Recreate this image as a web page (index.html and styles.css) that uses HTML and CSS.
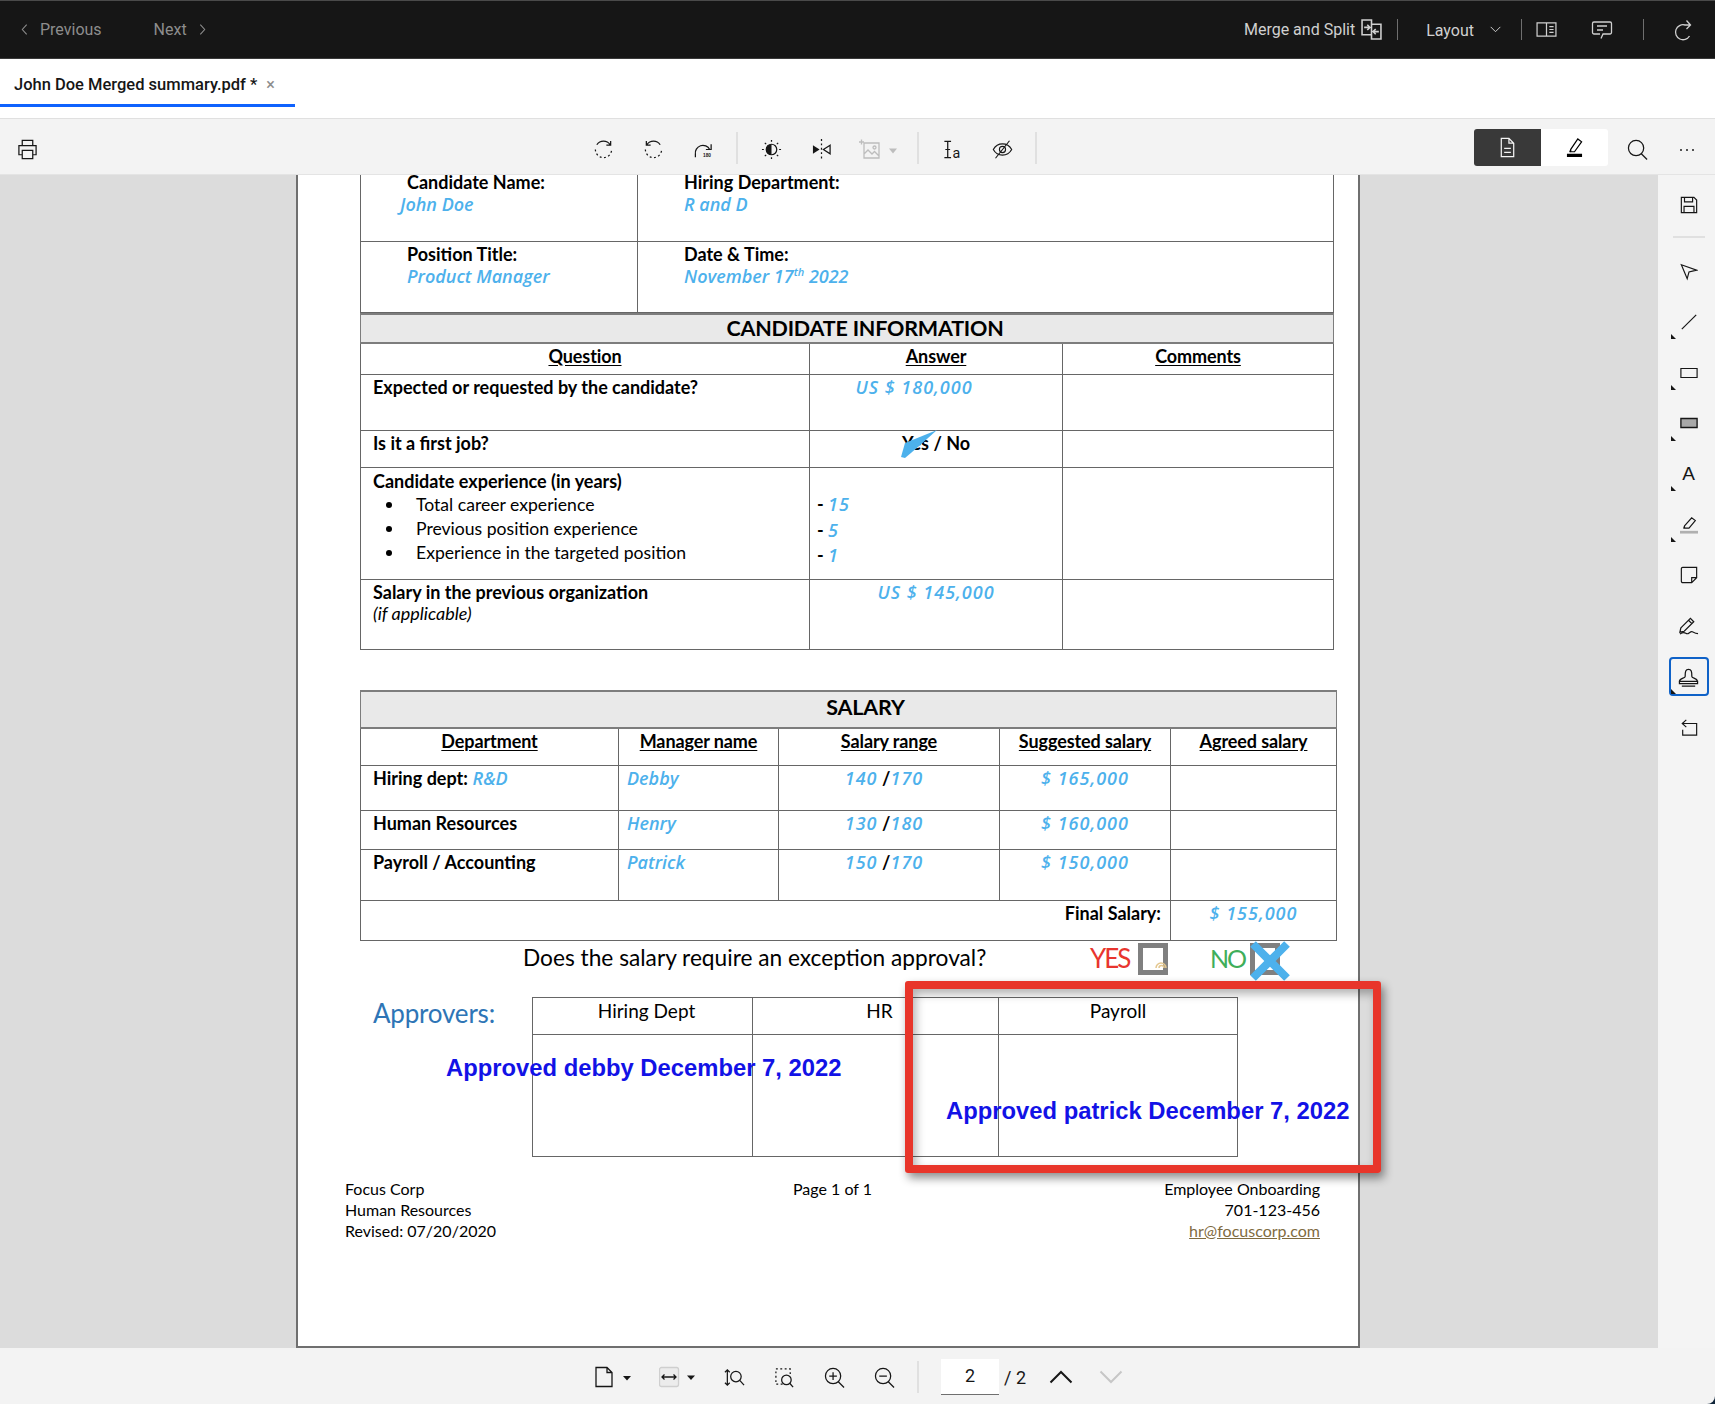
FILE: index.html
```html
<!DOCTYPE html>
<html lang="en">
<head>
<meta charset="utf-8">
<title>John Doe Merged summary.pdf</title>
<link rel="stylesheet" href="styles.css">
</head>
<body>
<div class="app">

  <header class="topbar">
    <div class="pager">
      <svg class="chev" viewBox="0 0 8 14"><path d="M6.500 1.500 1.500 7l5 5.500"/></svg>
      <span class="pager-label">Previous</span>
      <span class="pager-label next">Next</span>
      <svg class="chev after" viewBox="0 0 8 14"><path d="M1.500 1.500 6.500 7l-5 5.500"/></svg>
    </div>
    <div class="topbar-right">
      <span class="top-label">Merge and Split</span>
      <svg class="top-icon merge" viewBox="0 0 20 20"><path d="M1 1h9v14H1zM10 5h9v14h-9zM3 8h5M6 5.500 8.500 8 6 10.500M17 12h-5M14 9.500 11.500 12l2.500 2.500"/></svg>
      <i class="top-sep first"></i>
      <span class="top-label layout">Layout</span>
      <svg class="chev-down" viewBox="0 0 14 8"><path d="M1.500 1 7 6.500 12.500 1"/></svg>
      <i class="top-sep second"></i>
      <svg class="top-icon panel" viewBox="0 0 22 18"><path d="M1 2h20v14H1zM11 2v14M14 6h4.500M14 9h4.500M14 12h4.500"/></svg>
      <svg class="top-icon comment" viewBox="0 0 22 20"><path d="M3 2h16a1.500 1.500 0 0 1 1.500 1.500v9A1.500 1.500 0 0 1 19 14h-7l-2 4.500M9 14H3a1.500 1.500 0 0 1-1.500-1.500v-9A1.500 1.500 0 0 1 3 2M6 6h10M6 10h6"/></svg>
      <i class="top-sep third"></i>
      <svg class="top-icon refresh" viewBox="0 0 18 22"><path d="M15.500 17A7.500 7.500 0 1 1 11 6h5M12.500 1.500 16.500 6l-4 4"/></svg>
    </div>
  </header>

  <nav class="tabs">
    <div class="tab"><span>John Doe Merged summary.pdf *</span><span class="tab-close">×</span></div>
  </nav>

  <div class="toolbar">
    <button class="tool print">
      <svg viewBox="0 0 22 22"><path d="M5.500 7V1.500h11V7M5.500 16.500H2V7h18v9.500h-3.500M5.500 12h11v8.500h-11z"/></svg>
    </button>
    <button class="tool rotate-first">
      <svg viewBox="0 0 22 22"><path d="M4 6a8.500 8.500 0 0 1 14 0M18.500 2v4.500H14"/><path class="dashed" d="M2.500 11a8.500 8.500 0 0 0 17 0"/></svg>
    </button>
    <button class="tool">
      <svg viewBox="0 0 22 22"><path d="M18 6A8.500 8.500 0 0 0 4 6M3.500 2v4.500H8"/><path class="dashed" d="M2.500 11a8.500 8.500 0 0 0 17 0"/></svg>
    </button>
    <button class="tool">
      <svg viewBox="0 0 22 22"><path d="M2.500 19v-3a8 8 0 0 1 15-5M19 5.500V11h-5.500"/><text class="tiny" x="10.500" y="19">180</text></svg>
    </button>
    <i class="tool-sep"></i>
    <button class="tool">
      <svg viewBox="0 0 22 22"><circle cx="11" cy="11" r="5.500"/><path class="solid" d="M11 5.500a5.500 5.500 0 0 1 0 11z" transform="matrix(-1 0 0 1 22 0)"/><path d="M11 1v2M11 19v2M1 11h2M19 11h2M4 4l1.400 1.400M16.600 16.600 18 18M4 18l1.400-1.400M16.600 5.400 18 4"/></svg>
    </button>
    <button class="tool">
      <svg viewBox="0 0 22 22"><path class="solid" d="M2 6.500 9 11l-7 4.500z"/><path d="M20 6.500 13 11l7 4.500z"/><path class="dashed" d="M11 0v22"/></svg>
    </button>
    <button class="tool image-tool" disabled>
      <svg class="image-icon" viewBox="0 0 40 22"><path d="M5 4h15v15H5zM5 15l4-4 4 4 2.500-2.500L20 17"/><circle cx="15.500" cy="8.500" r="1.500"/><path d="M2.500.5v5M0 3h5"/><path class="solid" d="m30 9.500h8l-4 5z"/></svg>
    </button>
    <i class="tool-sep"></i>
    <button class="tool">
      <svg viewBox="0 0 22 22"><path d="M2.500 2.500h7M2.500 19.500h7M6 2.500v17M3.500 11h5"/><text class="glyph" x="11" y="19.500">a</text></svg>
    </button>
    <button class="tool">
      <svg viewBox="0 0 24 22"><path d="M1.500 11C4 6.500 8 4.500 12 4.500s8 2 10.500 6.500c-2.500 4.500-6.500 6.500-10.500 6.500S4 15.500 1.500 11z"/><circle cx="12" cy="11" r="3.500"/><path d="M20 1 4 21"/></svg>
    </button>
    <i class="tool-sep"></i>
    <div class="mode-switch">
      <button class="mode on">
        <svg viewBox="0 0 16 22"><path d="M1.500 1.500h8l5 5v14h-13zM9.500 1.500v5h5M4.500 12h7M4.500 16h7"/></svg>
      </button>
      <button class="mode">
        <svg viewBox="0 0 18 22"><path d="M5 13 12.500 2l4 3L9 15.500H5zM5 13l-1 3"/><path class="solid" d="M1 17.500h16V21H1z"/></svg>
      </button>
    </div>
    <button class="tool">
      <svg viewBox="0 0 22 22"><circle cx="9.500" cy="9.500" r="8"/><path d="m15 15.500 6 6"/></svg>
    </button>
    <button class="tool dots"><i></i><i></i><i></i></button>
  </div>

  <div class="workspace">
    <main class="viewer">
      <article class="pdf-page">

        <table class="doc-table head-table">
          <colgroup><col class="c-name"><col></colgroup>
          <tr class="r-name">
            <td class="info"><b>Candidate Name:</b><span class="hand shift">John Doe</span></td>
            <td class="info"><b>Hiring Department:</b><span class="hand">R and D</span></td>
          </tr>
          <tr class="r-title">
            <td class="info"><b>Position Title:</b><span class="hand">Product Manager</span></td>
            <td class="info"><b>Date &amp; Time:</b><span class="hand">November 17<sup>th</sup> 2022</span></td>
          </tr>
        </table>

        <table class="doc-table">
          <colgroup><col class="c-q"><col class="c-a"><col></colgroup>
          <tr class="r-band"><th class="band info-band" colspan="3">CANDIDATE INFORMATION</th></tr>
          <tr class="r-cols"><th><u>Question</u></th><th><u>Answer</u></th><th><u>Comments</u></th></tr>
          <tr class="r-expected">
            <td><b>Expected or requested by the candidate?</b></td>
            <td class="ans off-left"><span class="hand amt">US $ 180,000</span></td>
            <td></td>
          </tr>
          <tr class="r-first">
            <td><b>Is it a first job?</b></td>
            <td class="ans"><b class="yesno">Yes / No<svg class="tick" viewBox="0 0 36 28"><path d="M0 27 4 13 36 0 17 17 4 28z"/></svg></b></td>
            <td></td>
          </tr>
          <tr class="r-exp">
            <td>
              <b>Candidate experience (in years)</b>
              <ul class="exp-list">
                <li>Total career experience</li>
                <li>Previous position experience</li>
                <li>Experience in the targeted position</li>
              </ul>
            </td>
            <td class="years">
              <div>- <span class="hand amt">15</span></div>
              <div>- <span class="hand amt">5</span></div>
              <div>- <span class="hand amt">1</span></div>
            </td>
            <td></td>
          </tr>
          <tr class="r-prev">
            <td><b>Salary in the previous organization</b><em>(if applicable)</em></td>
            <td class="ans"><span class="hand amt">US $ 145,000</span></td>
            <td></td>
          </tr>
        </table>

        <table class="doc-table salary">
          <colgroup><col class="s1"><col class="s2"><col class="s3"><col class="s4"><col></colgroup>
          <tr class="s-band"><th class="band salary-band" colspan="5">SALARY</th></tr>
          <tr class="s-cols">
            <th><u>Department</u></th><th><u>Manager name</u></th><th><u>Salary range</u></th><th><u>Suggested salary</u></th><th><u>Agreed salary</u></th>
          </tr>
          <tr class="s-r1">
            <td><b>Hiring dept:</b> <span class="hand">R&amp;D</span></td>
            <td class="mgr"><span class="hand">Debby</span></td>
            <td class="ans range"><span class="hand amt">140</span> <b>/</b><span class="hand amt">170</span></td>
            <td class="ans"><span class="hand amt">$ 165,000</span></td>
            <td></td>
          </tr>
          <tr class="s-r2">
            <td><b>Human Resources</b></td>
            <td class="mgr"><span class="hand">Henry</span></td>
            <td class="ans range"><span class="hand amt">130</span> <b>/</b><span class="hand amt">180</span></td>
            <td class="ans"><span class="hand amt">$ 160,000</span></td>
            <td></td>
          </tr>
          <tr class="s-r3">
            <td><b>Payroll / Accounting</b></td>
            <td class="mgr"><span class="hand">Patrick</span></td>
            <td class="ans range"><span class="hand amt">150</span> <b>/</b><span class="hand amt">170</span></td>
            <td class="ans"><span class="hand amt">$ 150,000</span></td>
            <td></td>
          </tr>
          <tr class="s-final">
            <td class="final" colspan="4"><b>Final Salary:</b></td>
            <td class="ans"><span class="hand amt">$ 155,000</span></td>
          </tr>
        </table>

        <div class="exception">
          <span class="exception-q">Does the salary require an exception approval?</span>
          <span class="opt yes">YES</span>
          <span class="box"><svg class="wifi" viewBox="0 0 12 10"><path d="M1 9a5 5 0 0 1 10 0M4 9a2.500 2.500 0 0 1 5 0"/></svg></span>
          <span class="opt no">NO</span>
          <span class="box"><svg class="cross" viewBox="0 0 40 40"><path d="M3 3l34 34M37 3 3 37"/></svg></span>
        </div>

        <div class="approvers">
          <h2>Approvers:</h2>
          <table class="doc-table approve-table">
            <colgroup><col class="a1"><col class="a2"><col></colgroup>
            <tr class="a-head"><td>Hiring Dept</td><td>HR</td><td>Payroll</td></tr>
            <tr class="a-body"><td></td><td></td><td></td></tr>
          </table>
        </div>

        <footer class="doc-foot">
          <div>Focus Corp<br>Human Resources<br>Revised: 07/20/2020</div>
          <div>Page 1 of 1</div>
          <div class="foot-right">Employee Onboarding<br>701-123-456<br><a>hr@focuscorp.com</a></div>
        </footer>

        <div class="stamp debby">Approved debby December 7, 2022</div>
        <div class="stamp patrick">Approved patrick December 7, 2022</div>
      </article>
      <div class="callout"></div>
    </main>

    <aside class="sidebar">
      <button class="side save"><svg viewBox="0 0 20 20"><path d="M1.500 1.500h14l3 3v14h-17zM5 1.500v5h9v-5M4.500 18.500v-7h11v7"/></svg></button>
      <i class="side-sep"></i>
      <button class="side"><svg viewBox="0 0 20 20"><path d="M1.500 3 18.500 9 10 11 8 18.500z"/></svg></button>
      <button class="side flag"><svg viewBox="0 0 20 20"><path d="M2 18 18 2"/></svg></button>
      <button class="side flag"><svg viewBox="0 0 20 12"><path d="M1 1h18v10H1z"/></svg></button>
      <button class="side flag"><svg viewBox="0 0 20 12"><path class="grey" d="M1 1h18v10H1z"/></svg></button>
      <button class="side flag letter">A</button>
      <button class="side flag"><svg viewBox="0 0 20 20"><path d="M5 11 13 2l4 3-7 8.500H5zM5 11l-1 3"/><path class="rule" d="M0 18h20"/></svg></button>
      <button class="side"><svg viewBox="0 0 20 20"><path d="M3 1.500h15.500V13L13 18.500H3a1.500 1.500 0 0 1-1.500-1.500V3A1.500 1.500 0 0 1 3 1.500zM13 18.500V13h5.500"/></svg></button>
      <button class="side wide-icon"><svg viewBox="0 0 22 20"><path d="M3 12 13 2l3.500 3.500-10 10L2 16.500zM11 4l3.500 3.500M2 18.500c4-3 5-1.500 7-.500s4-3 6-2 4 2 6 2"/></svg></button>
      <button class="side active wide-icon flag"><svg viewBox="0 0 22 20"><path d="M7.500 9.500C7.500 4 8 2 11 2s3.500 2 3.500 7.500c0 2 5.500 1.500 6 5h-19c.5-3.500 6-3 6-5zM1.500 14.500h19V17h-19zM4 19.500h14"/></svg></button>
      <button class="side"><svg viewBox="0 0 20 20"><path d="M3 5h15.500v13H3V12M7 1 2.500 5 7 9"/></svg></button>
    </aside>
  </div>

  <footer class="bottombar">
    <button class="tool wide page-tool">
      <svg viewBox="0 0 40 22"><path d="M1 1.500h11l5 5V20.500H1zM12 1.500v5h5"/><path class="solid" d="M28 10h8l-4 4.500z"/></svg>
    </button>
    <button class="tool wide fit-tool">
      <svg viewBox="0 0 40 22"><rect class="fit-box" x=".5" y="1.500" width="19" height="19" rx="2"/><path d="M3 11h14M5.500 8.500 3 11l2.500 2.500M14.500 8.500 17 11l-2.500 2.500"/><path class="solid" d="M28 9.500h8l-4 4.500z"/></svg>
    </button>
    <button class="tool"><svg viewBox="0 0 22 22"><path d="M3.500 3v16M1 5.500 3.500 3 6 5.500M1 16.500 3.500 19 6 16.500"/><circle cx="12.500" cy="10" r="5.500"/><path d="m16.500 14 4.500 5"/></svg></button>
    <button class="tool"><svg viewBox="0 0 22 22"><path class="dashed" d="M9 18H2V2h15v6"/><circle cx="13" cy="13.500" r="5"/><path d="m16.500 17 3.500 4"/></svg></button>
    <button class="tool"><svg viewBox="0 0 22 22"><circle cx="9.500" cy="9.500" r="8"/><path d="m15 15.500 6 6M5.500 9.500h8M9.500 5.500v8"/></svg></button>
    <button class="tool"><svg viewBox="0 0 22 22"><circle cx="9.500" cy="9.500" r="8"/><path d="m15 15.500 6 6M5.500 9.500h8"/></svg></button>
    <i class="tool-sep"></i>
    <span class="page-input">2</span>
    <span class="page-total">/ 2</span>
    <button class="tool arrow up"><svg viewBox="0 0 24 14"><path d="M1.500 12.500 12 2l10.500 10.500"/></svg></button>
    <button class="tool arrow down"><svg viewBox="0 0 24 14"><path d="M1.500 1.500 12 12 22.500 1.500"/></svg></button>
  </footer>
</div>
</body>
</html>
```

FILE: styles.css
```css
* {
  box-sizing: border-box;
}
body {
  margin: 0;
  background: #fff;
  font-family: Roboto, "Noto Sans", sans-serif;
  color: #161616;
}
button {
  border: 0;
  padding: 0;
  background: none;
  font: inherit;
}
svg {
  display: block;
  flex: none;
  fill: none;
  stroke: currentColor;
  stroke-width: 1.3;
}
svg .solid {
  fill: currentColor;
  stroke: none;
}
svg .dashed {
  stroke-dasharray: 2 2.6;
}
svg text {
  fill: currentColor;
  stroke: none;
}
svg .tiny {
  font: 700 5px "Liberation Sans", sans-serif;
}
svg .glyph {
  font: 15px Roboto, sans-serif;
}

.app {
  width: 1715px;
  height: 1404px;
  display: flex;
  flex-direction: column;
  background: #10263a;
}

/* top dark bar */
.topbar {
  height: 59px;
  flex: none;
  display: flex;
  align-items: center;
  background: #161616;
  border-top: 1px solid #4a4a4a;
  border-bottom: 1px solid #3a3a3a;
  padding-left: 21px;
}
.pager {
  display: flex;
  align-items: center;
  color: #8d8d8d;
  font-size: 16px;
}
.chev {
  width: 7px;
  height: 13px;
  stroke-width: 1.2;
}
.chev.after {
  margin-left: 12px;
}
.pager-label {
  margin-left: 12px;
}
.pager-label.next {
  margin-left: 52px;
}
.topbar-right {
  margin-left: auto;
  display: flex;
  align-items: center;
  color: #d0d0d0;
}
.top-label {
  font-size: 16px;
}
.top-label.layout {
  margin-left: 28px;
  margin-top: 2px;
}
.top-icon.merge {
  width: 21px;
  height: 21px;
  margin-left: 6px;
  stroke-width: 1.5;
}
.top-icon.panel {
  width: 21px;
  height: 17px;
  margin-left: 14px;
}
.top-icon.comment {
  width: 22px;
  height: 20px;
  margin-left: 34px;
}
.top-icon.refresh {
  width: 18px;
  height: 22px;
  margin-left: 30px;
  margin-right: 23px;
}
.chev-down {
  width: 13px;
  height: 7px;
  margin-left: 15px;
  stroke-width: 1.1;
}
.top-sep {
  width: 1px;
  height: 21px;
  background: #6f6f6f;
}
.top-sep.first {
  margin-left: 15px;
}
.top-sep.second {
  margin-left: 19px;
}
.top-sep.third {
  margin-left: 30px;
}

/* tabs */
.tabs {
  height: 60px;
  flex: none;
  background: #fff;
  border-bottom: 1px solid #e0e0e0;
}
.tab {
  width: 295px;
  height: 48px;
  display: flex;
  align-items: center;
  padding: 6px 0 0 14px;
  border-bottom: 3px solid #0f62fe;
  font-size: 16.5px;
  font-weight: 500;
}
.tab-close {
  margin-left: 9px;
  color: #8d8d8d;
  font-size: 16px;
}

/* main toolbar */
.toolbar {
  height: 56px;
  flex: none;
  display: flex;
  align-items: center;
  padding-top: 6px;
  background: #f3f3f3;
  border-bottom: 1px solid #e4e4e4;
}
.tool {
  width: 50px;
  height: 40px;
  flex: none;
  display: flex;
  align-items: center;
  justify-content: center;
  color: #161616;
}
.tool svg {
  width: 21px;
  height: 21px;
}
.tool.print {
  width: 54px;
}
.tool.rotate-first {
  margin-left: 524px;
}
.tool.image-tool {
  width: 63px;
  justify-content: flex-start;
}
.tool .image-icon {
  width: 40px;
  height: 22px;
  margin-left: 13px;
  color: #bdbdbd;
}
.tool-sep {
  width: 2px;
  height: 32px;
  flex: none;
  margin: -4px 8px 0;
  background: #e0e0e0;
}
.mode-switch {
  display: flex;
  margin: -4px 4px 0 auto;
  height: 37px;
  border-radius: 3px;
  overflow: hidden;
  background: #fff;
}
.mode {
  width: 67px;
  display: flex;
  align-items: center;
  justify-content: center;
}
.mode.on {
  background: #393939;
  color: #f4f4f4;
}
.mode svg {
  width: 17px;
  height: 21px;
}
.tool.dots {
  gap: 4px;
  margin-right: 3px;
}
.tool.dots i {
  width: 2px;
  height: 2px;
  background: #525252;
}

/* document area */
.workspace {
  flex: 1;
  min-height: 0;
  display: flex;
}
.viewer {
  flex: 1;
  position: relative;
  background: #dcdcdc;
  padding-left: 296px;
}
.pdf-page {
  position: relative;
  width: 1064px;
  height: 100%;
  padding-left: 62px;
  background: #fff;
  border: 2px solid #6f6f6f;
  border-top: 0;
  font-family: Lato, "Noto Sans", sans-serif;
  font-size: 18px;
  color: #000;
}
.doc-table {
  width: 974px;
  border-collapse: collapse;
  table-layout: fixed;
}
.doc-table td,
.doc-table th {
  padding: 0;
  border: 1px solid #666;
  vertical-align: top;
}
.head-table td {
  border-top: 0;
}
.head-table tr + tr td {
  border-top: 1px solid #666;
}
.doc-table th {
  font-size: 18px;
  font-weight: 700;
  text-align: center;
  padding-top: 1px;
  letter-spacing: -.1px;
}
.doc-table u {
  text-underline-offset: 2px;
}
.doc-table b {
  font-size: 18px;
}
.doc-table th.band {
  background: #e9e9e9;
  font-size: 21.5px;
  border-width: 2px 1px;
  border-color: #7d7d7d;
  letter-spacing: -.2px;
}
.doc-table th.info-band {
  padding: 0 0 0 36px;
}
.doc-table th.salary-band {
  padding: 2px 0 0 34px;
}
.c-name {
  width: 277px;
}
.r-name {
  height: 66px;
}
.r-title {
  height: 71px;
}
.doc-table .info {
  padding: 0 0 0 46px;
}
.doc-table .r-title .info {
  padding-top: 3px;
}
.info b {
  display: block;
  line-height: 18px;
}
.r-name .info b {
  margin-top: -2px;
}
.info .hand {
  display: block;
  margin-top: 2px;
  line-height: 22px;
}
.info .hand.shift {
  margin-left: -7px;
}
.info .hand sup {
  font-size: 11px;
  line-height: 0;
}
.hand {
  font-family: "Open Sans", "DejaVu Sans", sans-serif;
  font-style: italic;
  font-weight: 600;
  font-size: 18px;
  color: #4db1ec;
}
.hand.amt {
  letter-spacing: 1px;
}
.c-q {
  width: 449px;
}
.c-a {
  width: 253px;
}
.r-band {
  height: 29px;
}
.r-cols {
  height: 32px;
}
.r-expected {
  height: 56px;
}
.r-first {
  height: 37px;
}
.r-exp {
  height: 112px;
}
.r-prev {
  height: 70px;
}
.doc-table td:first-child {
  padding-left: 12px;
}
.doc-table .info:first-child {
  padding-left: 46px;
}
.r-expected td {
  padding-top: 2px;
  line-height: 20px;
}
.r-first td {
  padding-top: 2px;
  line-height: 20px;
}
.r-exp td {
  padding-top: 3px;
  line-height: 20px;
}
.r-prev td {
  padding-top: 2px;
  line-height: 20px;
}
.r-prev b,
.r-prev em {
  display: block;
}
.r-prev em {
  margin-top: 1px;
}
.exp-list {
  margin: 2px 0 0;
  padding: 0 0 0 43px;
  list-style: none;
  font-size: 17.6px;
}
.exp-list li {
  position: relative;
  height: 24px;
  line-height: 24px;
}
.exp-list li::before {
  content: "";
  position: absolute;
  left: -30px;
  top: 9px;
  width: 6px;
  height: 6px;
  border-radius: 50%;
  background: #000;
}
.ans {
  text-align: center;
}
.doc-table .off-left {
  padding-right: 44px;
}
.doc-table .range {
  padding-right: 10px;
}
.yesno {
  position: relative;
  display: inline-block;
}
.tick {
  position: absolute;
  left: -1px;
  top: -3px;
  width: 36px;
  height: 28px;
  stroke: none;
  fill: #4db1ec;
}
.doc-table .years {
  padding: 25px 0 0 7px;
  font-weight: 700;
}
.years div {
  height: 25.5px;
  line-height: 22px;
}
.salary {
  width: 977px;
  margin-top: 40px;
}
.s1 {
  width: 258px;
}
.s2 {
  width: 160px;
}
.s3 {
  width: 221px;
}
.s4 {
  width: 171px;
}
.s-band {
  height: 37px;
}
.doc-table .s-cols th {
  padding-top: 1px;
}
.s-cols {
  height: 37px;
}
.s-r1 {
  height: 45px;
}
.s-r2 {
  height: 39px;
}
.s-r3 {
  height: 51px;
}
.s-final {
  height: 40px;
}
.salary td {
  padding-top: 1px;
  line-height: 22px;
}
.doc-table .mgr {
  padding-left: 8px;
}
td.final {
  text-align: right;
  padding-right: 9px;
}
.exception {
  height: 56px;
  display: flex;
  align-items: flex-start;
  padding: 1px 0 0 163px;
}
.exception-q {
  width: 567px;
  font-size: 22.7px;
  line-height: 32px;
}
.opt {
  width: 48px;
  font-size: 26px;
  line-height: 32px;
  letter-spacing: -2px;
}
.opt.yes {
  color: #e8352e;
}
.opt.no {
  color: #3fae5a;
  width: 40px;
  margin-left: 42px;
  font-size: 25px;
}
.box {
  position: relative;
  width: 30px;
  height: 32px;
  margin-top: 1px;
  border: 5px solid #808080;
}
.wifi {
  position: absolute;
  right: -4px;
  bottom: 1px;
  width: 12px;
  height: 10px;
  color: #e4c78f;
  stroke-width: 1.5;
}
.cross {
  position: absolute;
  left: -5px;
  top: -7px;
  width: 40px;
  height: 40px;
  color: #4db1ec;
  stroke-width: 8;
}
.approvers {
  display: flex;
  padding-left: 13px;
}
.approvers h2 {
  width: 159px;
  margin: 0;
  font-size: 26px;
  font-weight: 400;
  line-height: 32px;
  letter-spacing: -.2px;
  color: #2e75b6;
}
.approve-table {
  width: 706px;
  font-size: 19px;
}
.a1 {
  width: 220px;
}
.a2 {
  width: 246px;
}
.a-head {
  height: 37px;
}
.a-body {
  height: 122px;
}
.doc-table .a-head td {
  text-align: center;
  line-height: 26px;
  padding: 0;
}
.doc-table .a-head td:not(:last-child) {
  padding-left: 8px;
}
.doc-foot {
  display: grid;
  grid-template-columns: 1fr auto 1fr;
  width: 975px;
  margin: 21px 0 0 -15px;
  font-size: 16px;
  line-height: 21px;
}
.foot-right {
  text-align: right;
}
.foot-right a {
  color: #7f6b3f;
  text-decoration: underline;
}
.stamp {
  position: absolute;
  font-family: "Liberation Sans", Arial, sans-serif;
  font-weight: 700;
  font-size: 23.8px;
  line-height: 28px;
  white-space: nowrap;
  color: #1212e6;
}
.stamp.debby {
  left: 148px;
  top: 879px;
}
.stamp.patrick {
  left: 648px;
  top: 922px;
}
.callout {
  position: absolute;
  left: 905px;
  top: 806px;
  width: 476px;
  height: 192px;
  border: 8px solid #e8352a;
  border-radius: 3px;
  box-shadow: 3px 5px 10px rgba(0, 0, 0, .45), inset 3px 5px 10px rgba(0, 0, 0, .3);
}

/* right tool rail */
.sidebar {
  width: 57px;
  flex: none;
  display: flex;
  flex-direction: column;
  align-items: center;
  padding: 5px 0 0 4px;
  background: #f4f4f4;
}
.side {
  position: relative;
  width: 40px;
  height: 50.7px;
  flex: none;
  display: flex;
  align-items: center;
  justify-content: center;
  color: #161616;
}
.side svg {
  width: 18px;
  height: 20px;
}
.side.wide-icon svg {
  width: 21px;
}
.side.save {
  height: 50px;
}
.side.flag::after {
  content: "";
  position: absolute;
  left: 2px;
  bottom: 8px;
  border-left: 5px solid #161616;
  border-top: 5px solid transparent;
}
.side svg .grey {
  fill: #a8a8a8;
  stroke-width: 1.5;
}
.side svg .rule {
  stroke: #b0b0b0;
  stroke-width: 3;
}
.side.letter {
  font-family: "Liberation Sans", sans-serif;
  font-size: 19px;
}
.side-sep {
  width: 32px;
  height: 2px;
  flex: none;
  margin: 6px 0 8px;
  background: #e0e0e0;
}
.side.active {
  height: 39px;
  margin: 5.850px 0;
  border: 2px solid #0f62c8;
  border-radius: 4px;
}
.side.active::after {
  left: 0;
  bottom: 0;
}

/* bottom bar */
.bottombar {
  height: 56px;
  flex: none;
  display: flex;
  align-items: center;
  padding: 2px 0 0 595px;
  background: #f3f3f3;
  border-bottom-right-radius: 8px;
}
.bottombar .tool.wide {
  width: 40px;
}
.bottombar .tool.wide svg {
  width: 40px;
  height: 22px;
}
.bottombar .page-tool {
  margin-right: 24px;
}
.bottombar .fit-tool {
  margin-right: 10px;
}
.fit-box {
  stroke: #cfcfcf;
  fill: #ececec;
}
.bottombar .tool-sep {
  margin: 0 22px 0 8px;
}
.page-input {
  width: 58px;
  height: 36px;
  background: #fff;
  border-bottom: 1px solid #6f6f6f;
  text-align: center;
  font-size: 18px;
  line-height: 34px;
}
.page-total {
  width: 30px;
  margin-left: 5px;
  font-size: 18px;
}
.tool.arrow.up {
  margin-left: 2px;
}
.tool.arrow svg {
  width: 24px;
  height: 14px;
  stroke-width: 2;
}
.tool.arrow.down svg {
  color: #c6c6c6;
}
```
